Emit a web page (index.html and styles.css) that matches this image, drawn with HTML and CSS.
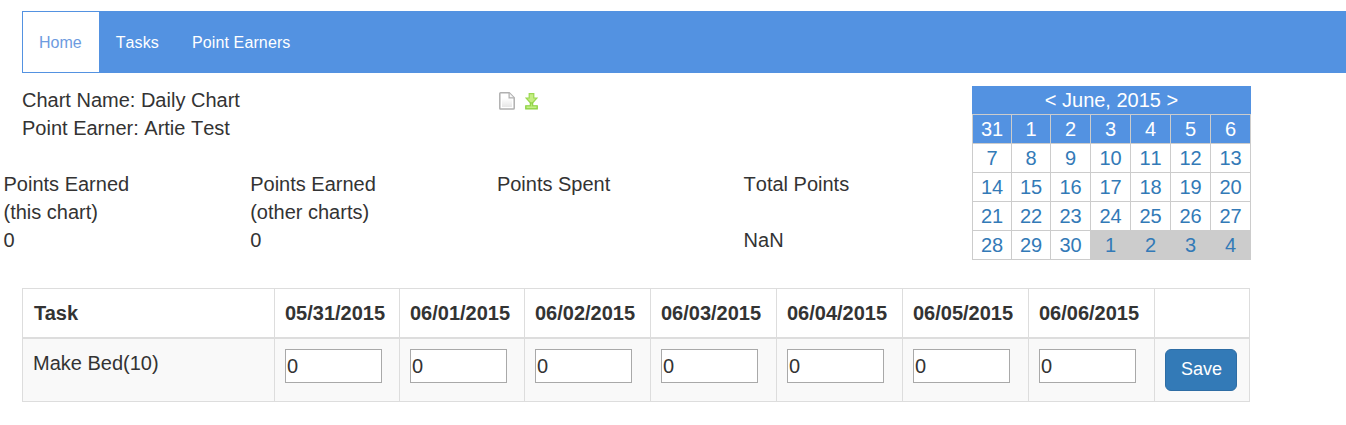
FILE: index.html
```html
<!DOCTYPE html>
<html lang="en">
<head>
<meta charset="utf-8">
<title>Daily Chart</title>
<link rel="stylesheet" href="styles.css">
</head>
<body>
<nav class="navbar">
  <a class="nav-item active">Home</a>
  <a class="nav-item">Tasks</a>
  <a class="nav-item">Point Earners</a>
</nav>
<div class="top">
  <div class="summary">
    <div class="info">
      <div class="names">
        <div>Chart Name: Daily Chart</div>
        <div>Point Earner: Artie Test</div>
      </div>
      <div class="icons">
        <svg class="icon-page" width="16" height="18" viewBox="0 0 16 18">
          <defs><linearGradient id="paper" x1="0" y1="0" x2="0" y2="1"><stop offset="0" stop-color="#fff"/><stop offset="1" stop-color="#e6e6e6"/></linearGradient></defs>
          <path d="M1.6 .8H10.2L15.2 5.8V16.2Q15.2 17.1 14.3 17.1H1.7Q.8 17.1 .8 16.2V1.6Q.8.8 1.6.8Z" fill="#fff" stroke="#b0b0b0" stroke-width="1.5"/>
          <path d="M3 6H13V15H3Z" fill="url(#paper)"/>
          <path d="M10.1 1V5.9H15" fill="#f7f7f7" stroke="#b0b0b0" stroke-width="1.2"/>
        </svg>
        <svg class="icon-download" width="13" height="18" viewBox="0 0 13 18">
          <path d="M4.2 1.7H8.8V6H12L6.5 12L1 6H4.2Z" fill="#c5ee83" stroke="#9bd850" stroke-width="1.2"/>
          <path d="M5.3 11H7.7V13.8H12.3V16.9H.7V13.8H5.3Z" fill="#b5ea70" stroke="#8cd043" stroke-width="1.1"/>
          <path d="M2 15.3H11" stroke="#c9f08e" stroke-width="1"/>
        </svg>
      </div>
    </div>
    <div class="points">
      <div>Points Earned<br>(this chart)<br>0</div>
      <div>Points Earned<br>(other charts)<br>0</div>
      <div>Points Spent</div>
      <div>Total Points<br><br>NaN</div>
    </div>
  </div>
  <div class="calendar">
    <div class="month">&lt; June, 2015 &gt;</div>
    <div class="days">
      <a class="week">31</a><a class="week">1</a><a class="week">2</a><a class="week">3</a><a class="week">4</a><a class="week">5</a><a class="week">6</a>
      <a>7</a><a>8</a><a>9</a><a>10</a><a>11</a><a>12</a><a>13</a>
      <a>14</a><a>15</a><a>16</a><a>17</a><a>18</a><a>19</a><a>20</a>
      <a>21</a><a>22</a><a>23</a><a>24</a><a>25</a><a>26</a><a>27</a>
      <a>28</a><a>29</a><a>30</a><a class="other">1</a><a class="other">2</a><a class="other">3</a><a class="other">4</a>
    </div>
  </div>
</div>
<table class="tasks">
  <colgroup><col class="c-task"><col class="c-narrow"><col class="c-narrow"><col class="c-day"><col class="c-day"><col class="c-day"><col class="c-day"><col class="c-day"><col class="c-save"></colgroup>
  <thead>
    <tr><th class="task-head">Task</th><th>05/31/2015</th><th>06/01/2015</th><th>06/02/2015</th><th>06/03/2015</th><th>06/04/2015</th><th>06/05/2015</th><th>06/06/2015</th><th></th></tr>
  </thead>
  <tbody>
    <tr>
      <td>Make Bed(10)</td>
      <td><input class="score" value="0"></td>
      <td><input class="score" value="0"></td>
      <td><input class="score" value="0"></td>
      <td><input class="score" value="0"></td>
      <td><input class="score" value="0"></td>
      <td><input class="score" value="0"></td>
      <td><input class="score" value="0"></td>
      <td><button class="save">Save</button></td>
    </tr>
  </tbody>
</table>
</body>
</html>
```
FILE: styles.css
```css
* { box-sizing: border-box; }
body {
  margin: 0;
  padding-top: 11px;
  background: #fff;
  color: #333;
  font: 20px/28px "Liberation Sans", Arial, sans-serif;
  font-kerning: none;
  overflow: hidden;
}
.navbar {
  display: flex;
  height: 62px;
  margin-left: 22px;
  padding: 1px 0 1px 1px;
  background: #5392e1;
  font-size: 16px;
}
.nav-item {
  display: flex;
  align-items: center;
  padding: 2px 17px 0 16px;
  color: #fff;
}
.nav-item.active { background: #fff; color: #6d9be0; }
.nav-item + .nav-item {
  padding-left: 17px;
  padding-right: 16px;
  letter-spacing: 0.12px;
}
.top {
  display: flex;
  justify-content: space-between;
  width: 1251px;
  height: 215px;
  padding-top: 13px;
}
.summary { width: 972px; }
.info { display: flex; }
.names { width: 477px; margin-left: 22px; }
.icons {
  display: flex;
  gap: 10px;
  padding-top: 6px;
}
.points {
  display: grid;
  grid-template-columns: repeat(4, 246.7px);
  padding: 28px 0 0 3.5px;
}
.calendar { width: 279px; color: #fff; text-align: center; }
.month { height: 28px; background: #5392e1; }
.days {
  display: grid;
  grid-template-columns: 38px 38px repeat(5, 39px);
  grid-auto-rows: 28px;
  gap: 1px;
  padding: 1px;
  background: #ccc;
}
.days a { background: #fff; color: #337ab7; }
.days .week { background: #5392e1; color: #fff; }
.days .other { background: #ccc; }
.tasks {
  width: 1228px;
  margin-left: 22px;
  table-layout: fixed;
  border: 1px solid #ddd;
  border-width: 1px 0 0 1px;
  border-spacing: 0;
}
.c-task { width: 252px; }
.c-narrow { width: 125px; }
.c-day { width: 126px; }
.c-save { width: 95px; }
.tasks th, .tasks td {
  padding: 10px 0 0 10px;
  border: 0 solid #ddd;
  border-right-width: 1px;
  text-align: left;
  vertical-align: top;
}
.tasks th { height: 50px; border-bottom-width: 2px; }
.tasks .task-head { padding-left: 11px; font-kerning: normal; }
.tasks td { height: 63px; border-bottom-width: 1px; background: #f9f9f9; }
.score {
  display: block;
  width: 97px;
  height: 34px;
  padding: 1px;
  border: 1px solid #a9a9a9;
  border-radius: 0;
  background: #fff;
  color: #333;
  font: inherit;
}
.save {
  display: block;
  width: 72px;
  height: 42px;
  padding: 0 0 2px 1px;
  border: 1px solid #2e6da4;
  border-radius: 6px;
  background: #337ab7;
  color: #fff;
  font: 18px/24px "Liberation Sans", Arial, sans-serif;
}
```
